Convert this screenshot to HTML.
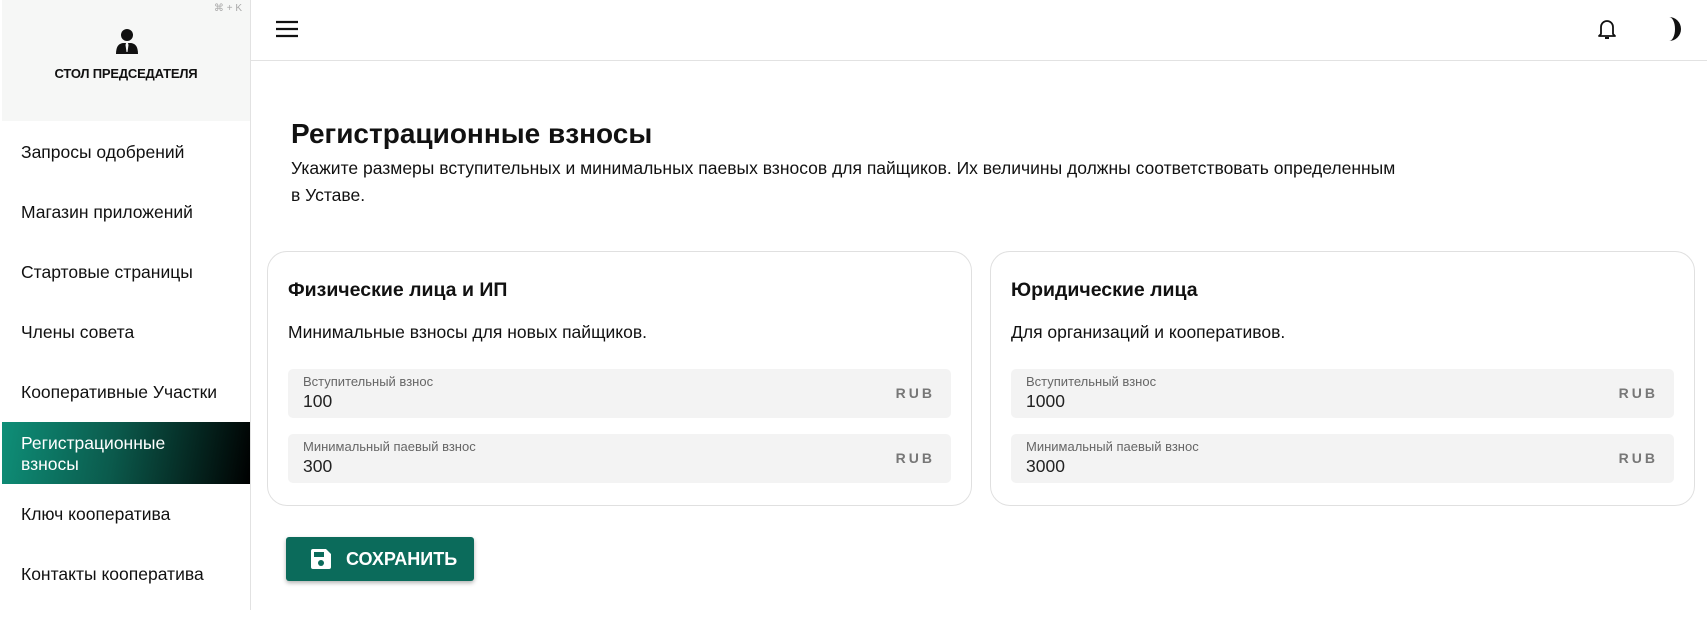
<!DOCTYPE html>
<html><head><meta charset="utf-8"><style>
*{box-sizing:border-box;margin:0;padding:0}
body{width:1707px;height:642px;overflow:hidden;background:#fff;font-family:"Liberation Sans",sans-serif;color:#111;position:relative}
.sb{position:absolute;left:0;top:0;width:251px;height:610px;border-right:1px solid #e2e2e2}
.sbh{position:absolute;left:2px;top:0;width:248px;height:121px;background:#f6f7f6}
.kbd{position:absolute;right:8px;top:3px;font-size:10px;color:#aaa}
.sbh .t{position:absolute;top:66px;width:100%;text-align:center;font-size:13px;font-weight:bold;letter-spacing:-.2px}
.it{position:absolute;left:21px;font-size:17.5px;color:#111}
.act{position:absolute;left:2px;top:422px;width:248px;height:62px;background:linear-gradient(100deg,#0e8f78 0%,#0b5a4c 45%,#000 100%);color:#fff;font-size:17.5px;padding:11px 0 0 19px;line-height:21px}
.top{position:absolute;left:251px;top:0;right:0;height:61px;border-bottom:1px solid #e2e2e2}
h1{position:absolute;left:291px;top:118px;font-size:28px;font-weight:bold}
.desc{position:absolute;left:291px;top:155px;font-size:17.5px;line-height:27px;width:1200px}
.card{position:absolute;top:251px;width:705px;height:255px;border:1px solid #e0e0e0;border-radius:20px}
.card h2{position:absolute;left:20px;top:27px;font-size:19.5px;font-weight:bold}
.card .s{position:absolute;left:20px;top:70px;font-size:17.5px}
.inp{position:absolute;left:20px;width:663px;height:49px;background:#f3f3f3;border-radius:5px}
.inp .l{position:absolute;left:15px;top:5px;font-size:13px;color:#666}
.inp .v{position:absolute;left:15px;top:22px;font-size:17.5px;color:#222}
.inp .r{position:absolute;right:16px;top:16px;font-size:14px;color:#777;letter-spacing:3px;font-weight:bold}
.btn{position:absolute;left:286px;top:537px;width:188px;height:44px;background:#0b6b5b;border-radius:3px;box-shadow:0 2px 4px rgba(0,0,0,.3);color:#fff;font-size:18px;font-weight:bold}
</style></head><body>
<div class="sb">
 <div class="sbh"><div class="kbd">⌘ + K</div>
  <svg style="position:absolute;left:113px;top:28px" width="24" height="26" viewBox="0 0 24 26"><circle cx="12" cy="7" r="6" fill="#111"/><path d="M1 26 Q1 15 9 15 L11 15 L10.5 17 L11.5 24 L12.5 24 L13.5 17 L13 15 L15 15 Q23 15 23 26Z" fill="#111"/></svg>
  <div class="t">СТОЛ ПРЕДСЕДАТЕЛЯ</div></div>
 <div class="it" style="top:142px">Запросы одобрений</div>
 <div class="it" style="top:202px">Магазин приложений</div>
 <div class="it" style="top:262px">Стартовые страницы</div>
 <div class="it" style="top:322px">Члены совета</div>
 <div class="it" style="top:382px">Кооперативные Участки</div>
 <div class="act">Регистрационные<br>взносы</div>
 <div class="it" style="top:504px">Ключ кооператива</div>
 <div class="it" style="top:564px">Контакты кооператива</div>
</div>
<div class="top">
 <svg style="position:absolute;left:24px;top:19px" width="24" height="20" viewBox="0 0 24 20"><path d="M1 3H23M1 10H23M1 17H23" stroke="#111" stroke-width="2.2"/></svg>
 <svg style="position:absolute;left:1345px;top:17px" width="22" height="24" viewBox="0 0 22 24"><path d="M5 17V10a6 6 0 0 1 12 0v7l2 2H3z" fill="none" stroke="#111" stroke-width="1.8" stroke-linejoin="round"/><path d="M9 21h4" stroke="#111" stroke-width="2"/></svg>
 <svg style="position:absolute;left:1414px;top:16px" width="20" height="26" viewBox="0 0 20 26"><path d="M4 1A12 12 0 0 1 4 25A6 12 0 0 0 4 1Z" fill="#111"/></svg>
</div>
<h1>Регистрационные взносы</h1>
<div class="desc">Укажите размеры вступительных и минимальных паевых взносов для пайщиков. Их величины должны соответствовать определенным<br>в Уставе.</div>
<div class="card" style="left:267px">
 <h2>Физические лица и ИП</h2><div class="s">Минимальные взносы для новых пайщиков.</div>
 <div class="inp" style="top:117px"><div class="l">Вступительный взнос</div><div class="v">100</div><div class="r">RUB</div></div>
 <div class="inp" style="top:182px"><div class="l">Минимальный паевый взнос</div><div class="v">300</div><div class="r">RUB</div></div>
</div>
<div class="card" style="left:990px">
 <h2>Юридические лица</h2><div class="s">Для организаций и кооперативов.</div>
 <div class="inp" style="top:117px"><div class="l">Вступительный взнос</div><div class="v">1000</div><div class="r">RUB</div></div>
 <div class="inp" style="top:182px"><div class="l">Минимальный паевый взнос</div><div class="v">3000</div><div class="r">RUB</div></div>
</div>
<div class="btn">
 <svg style="position:absolute;left:23px;top:10px" width="24" height="24" viewBox="0 0 24 24"><path d="M2 4a2 2 0 0 1 2-2h13l5 5v13a2 2 0 0 1-2 2H4a2 2 0 0 1-2-2z" fill="#fff"/><rect x="5" y="5" width="10" height="5" fill="#0b6b5b"/><circle cx="12" cy="16" r="3" fill="#0b6b5b"/></svg>
 <span style="position:absolute;left:60px;top:12px">СОХРАНИТЬ</span>
</div>
</body></html>
